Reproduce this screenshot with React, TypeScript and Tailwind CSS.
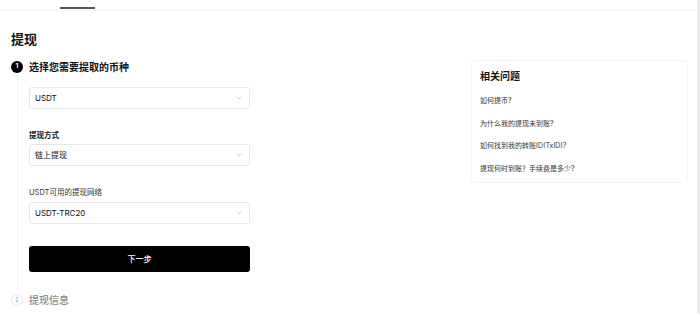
import { ChevronDown } from "lucide-react";

const font = { fontFamily: '"Inter", "Noto Sans CJK SC", sans-serif' };

const questions = ["如何提币?", "为什么我的提现未到账?", "如何找到我的转账ID(TxID)?", "提现何时到账？手续费是多少?"];

function Select({ value }: { value: string }) {
	return (
		<div className="flex h-[22px] w-[221px] items-center justify-between rounded-[3px] border border-[#e8e8e8] bg-white pl-[5px] pr-[6px] text-[8px] text-[#121212]">
			<span>{value}</span>
			<ChevronDown size={8} strokeWidth={1.5} className="text-[#a0a0a0]" />
		</div>
	);
}

export default function App() {
	return (
		<div className="relative h-[314px] w-[700px] overflow-hidden bg-white text-[#121212]" style={font}>
			<div className="flex h-[11px] w-[697px] border-b border-[#f2f2f2] pt-[7px]">
				<div className="ml-[60px] h-[2px] w-[35px] bg-[#555]" />
			</div>
			<div className="absolute right-0 top-0 h-full w-[3px] bg-[#ececec]" />

			<div className="flex">
				<div className="w-[471px] pl-[11px]">
					<h1 className="mt-[18px] text-[13px] font-bold leading-[20px]">提现</h1>

					<div className="mt-[11px] flex h-[14px] items-center gap-[6px]">
						<div className="flex h-[12px] w-[12px] items-center justify-center rounded-full bg-black text-[6.5px] font-bold text-white">1</div>
						<span className="text-[10px] font-semibold leading-[14px]">选择您需要提取的币种</span>
					</div>

					<div className="ml-[6px] flex border-l border-[#f0f0f0] pb-[18px] pl-[11px]">
						<div className="flex flex-col">
							<div className="mt-[13px]">
								<Select value="USDT" />
							</div>
							<div className="mt-[22px] text-[7.5px] font-semibold leading-[10px]">提现方式</div>
							<div className="mt-[3px]">
								<Select value="链上提现" />
							</div>
							<div className="mt-[22px] text-[7.5px] leading-[10px] text-[#333]">USDT可用的提现网络</div>
							<div className="mt-[4px]">
								<Select value="USDT-TRC20" />
							</div>
							<button className="mt-[22px] flex h-[26px] w-[221px] items-center justify-center rounded-[3px] bg-black text-[8px] font-medium text-white">
								下一步
							</button>
						</div>
					</div>

					<div className="mt-[3px] flex h-[14px] items-center gap-[6px]">
						<div className="flex h-[12px] w-[12px] items-center justify-center rounded-full border border-[#ececec] text-[5.5px] text-[#a0a0a0]">2</div>
						<span className="text-[10px] font-medium leading-[14px] text-[#8a8a8a]">提现信息</span>
					</div>
				</div>

				<div className="mt-[49px] h-[123px] w-[217px] rounded-[3px] border border-[#f4f4f4] px-[8px] pt-[8px]">
					<div className="text-[10px] font-semibold leading-[14px]">相关问题</div>
					<div className="mt-[13px] flex flex-col gap-[12.7px]">
						{questions.map((q) => (
							<div key={q} className="text-[7px] leading-[10px] text-[#333]">{q}</div>
						))}
					</div>
				</div>
			</div>
		</div>
	);
}
